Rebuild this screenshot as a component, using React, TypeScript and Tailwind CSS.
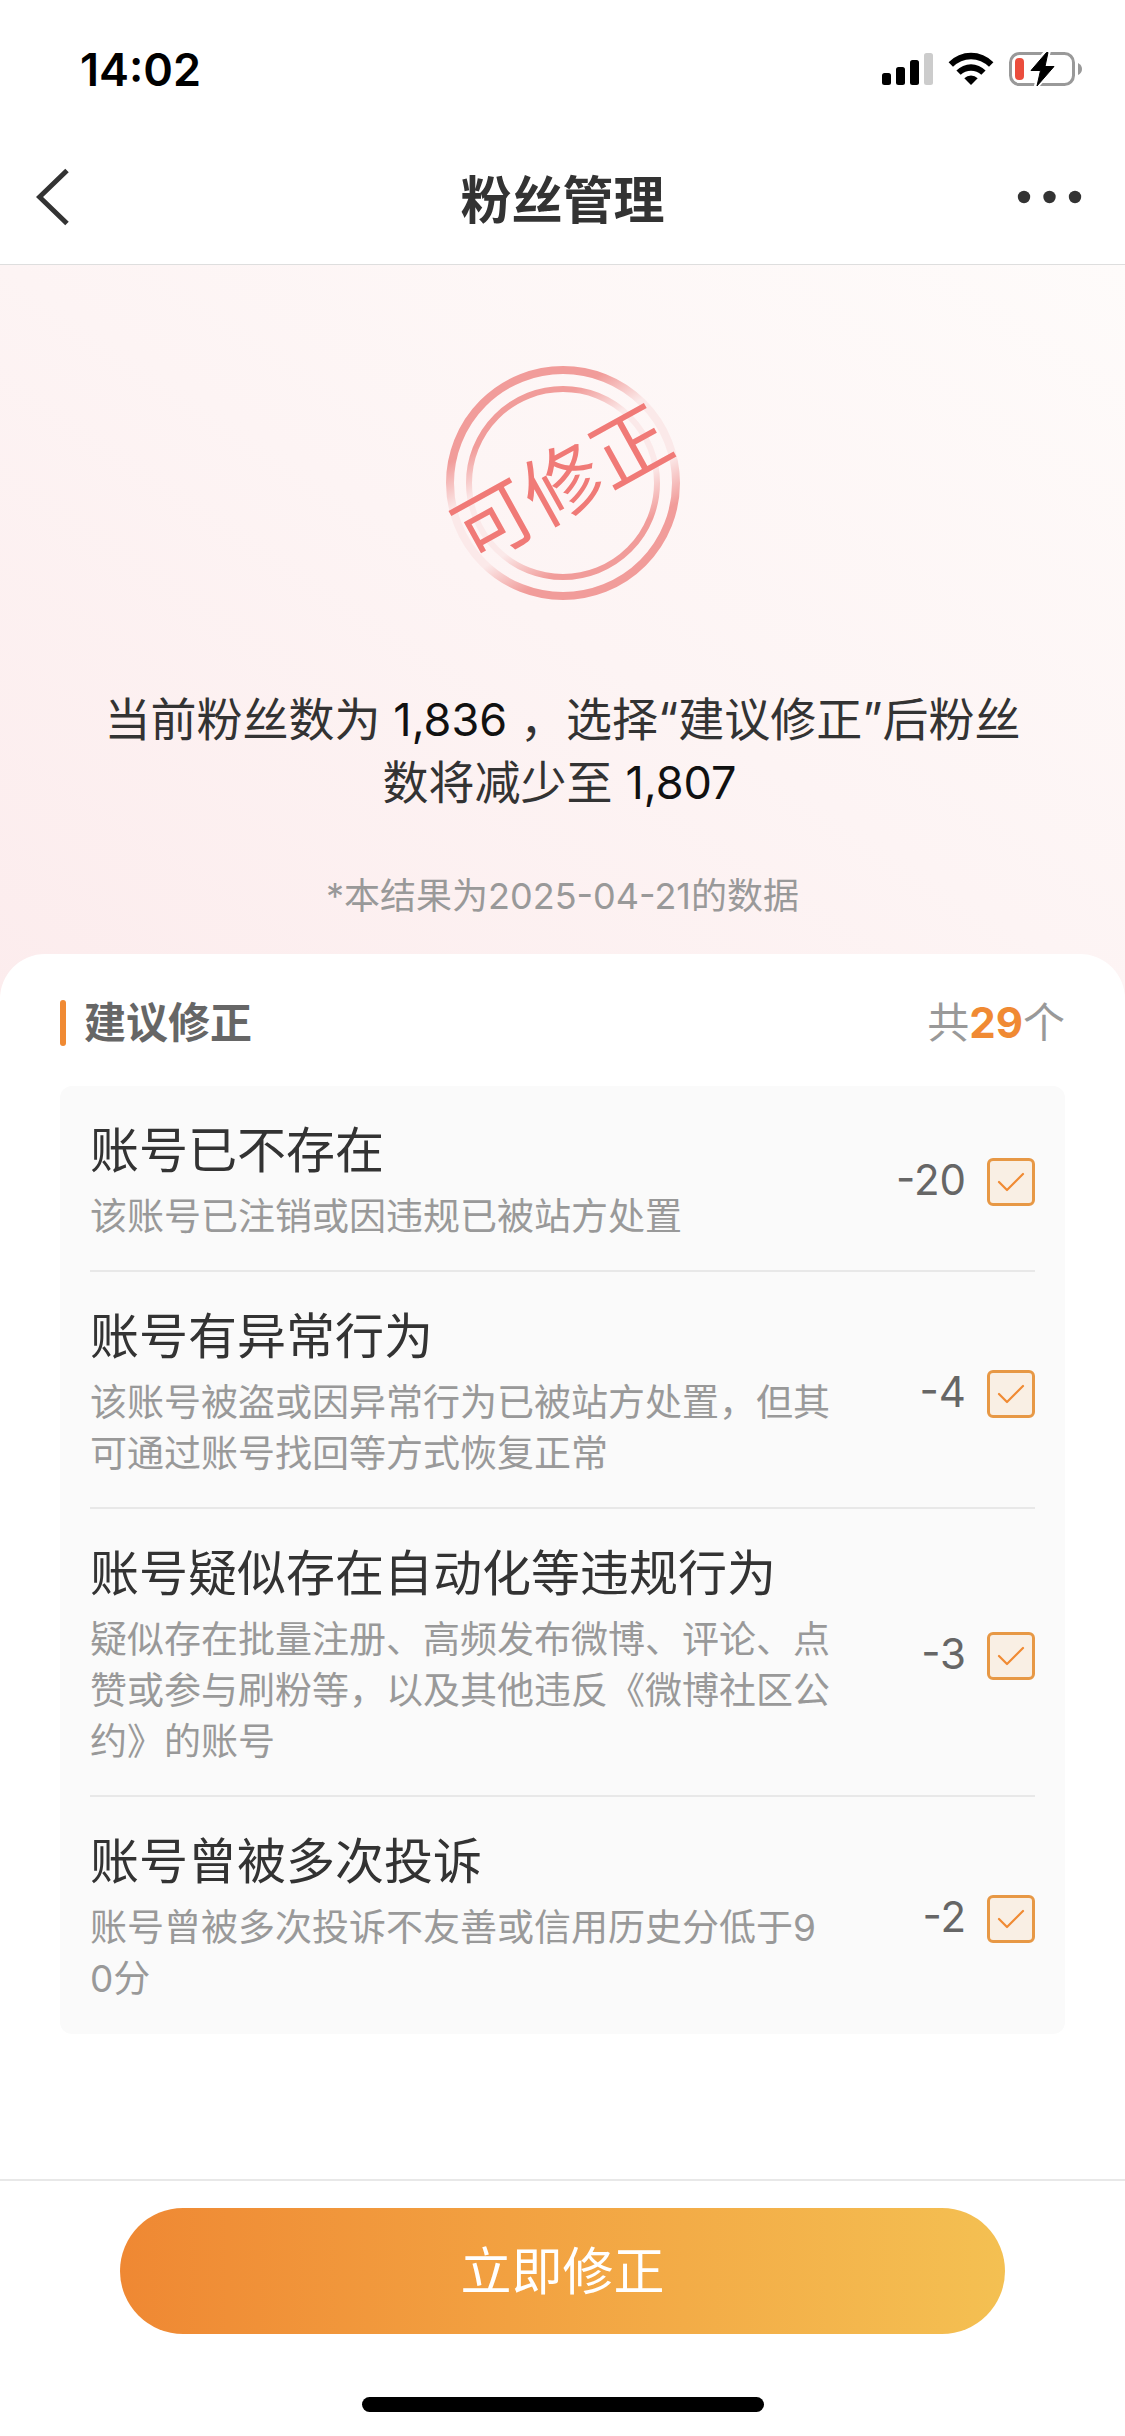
import React, { useState } from 'react';

interface FixItem {
  id: string;
  title: string;
  desc: string;
  count: number;
}

const ITEMS: FixItem[] = [
  { id: 'gone', title: '账号已不存在', desc: '该账号已注销或因违规已被站方处置', count: 20 },
  { id: 'abnormal', title: '账号有异常行为', desc: '该账号被盗或因异常行为已被站方处置，但其可通过账号找回等方式恢复正常', count: 4 },
  { id: 'bot', title: '账号疑似存在自动化等违规行为', desc: '疑似存在批量注册、高频发布微博、评论、点赞或参与刷粉等，以及其他违反《微博社区公约》的账号', count: 3 },
  { id: 'reported', title: '账号曾被多次投诉', desc: '账号曾被多次投诉不友善或信用历史分低于90分', count: 2 },
];

const StatusBar: React.FC = () => (
  <div className="flex items-center justify-between h-[138px] pl-20 pr-[42px] text-black">
    <span className="text-[45px] leading-none font-semibold">14:02</span>
    <div className="flex items-center gap-[15px]">
      <svg width="51" height="34" viewBox="0 0 51 34">
        <rect x="0" y="21" width="9" height="12" rx="2.5" />
        <rect x="14" y="15" width="9" height="18" rx="2.5" />
        <rect x="28" y="8" width="9" height="25" rx="2.5" />
        <rect x="42" y="1" width="9" height="32" rx="2.5" fill="#cccccc" />
      </svg>
      <svg width="46" height="34" viewBox="0 0 46 34">
        <path d="M0.6 10.2 A31.5 31.5 0 0 1 45.4 10.2 L41 14.8 A25 25 0 0 0 5 14.8 Z" />
        <path d="M8.4 18.4 A20.6 20.6 0 0 1 37.6 18.4 L33.3 22.8 A14.8 14.8 0 0 0 12.7 22.8 Z" />
        <path d="M16.3 26.2 A9.6 9.6 0 0 1 29.7 26.2 L23 33 Z" />
      </svg>
      <svg width="74" height="36" viewBox="0 0 74 36">
        <rect x="1.5" y="2.5" width="63" height="31" rx="9" fill="none" stroke="#999999" strokeWidth="3" />
        <path d="M69 12 Q73 14 73 18 Q73 22 69 24 Z" fill="#999999" />
        <rect x="6" y="7" width="9" height="22" rx="4" fill="#eb4d3d" />
        <path d="M37.5 1 L22 19.5 L31 19.5 L27.5 35 L45 15.5 L35.5 15.5 L39 1.5 Z" stroke="#ffffff" strokeWidth="5" />
        <path d="M37.5 1.5 L22 19.5 L31.5 19.5 L28 35 L45 15.5 L36 15.5 L39 1.5 Z" stroke="#000000" strokeWidth="1" strokeLinejoin="round" />
      </svg>
    </div>
  </div>
);

const NavBar: React.FC = () => (
  <header className="flex items-center justify-between h-[127px] pb-2 px-9 border-b border-[#dedede] text-[#333333]">
    <button type="button" aria-label="返回" className="w-[72px]">
      <svg width="34" height="58" viewBox="0 0 34 58" fill="none" stroke="currentColor" strokeWidth="5">
        <path d="M31 2.5 L3.5 29 L31 55.5" />
      </svg>
    </button>
    <h1 className="pt-1.5 text-[51px] leading-none font-bold">粉丝管理</h1>
    <button type="button" aria-label="更多" className="w-[72px]">
      <svg width="72" height="14" viewBox="0 0 72 14" fill="currentColor">
        <circle cx="7" cy="7" r="6.2" />
        <circle cx="32.5" cy="7" r="6.2" />
        <circle cx="58" cy="7" r="6.2" />
      </svg>
    </button>
  </header>
);

const Stamp: React.FC = () => (
  <svg width="234" height="234" viewBox="0 0 234 234" className="overflow-visible">
    <defs>
      <linearGradient id="ring" gradientUnits="userSpaceOnUse" x1="58" y1="16" x2="176" y2="218">
        <stop offset="0.18" stopColor="#f19c9a" />
        <stop offset="0.36" stopColor="#fbe9e9" />
        <stop offset="0.64" stopColor="#fbe9e9" />
        <stop offset="0.82" stopColor="#f19c9a" />
      </linearGradient>
    </defs>
    <circle cx="117" cy="117" r="113" fill="none" stroke="url(#ring)" strokeWidth="8" />
    <circle cx="117" cy="117" r="94" fill="none" stroke="url(#ring)" strokeWidth="6" />
    <text x="116" y="146" textAnchor="middle" fontSize="78" fill="#f07a77" transform="rotate(-29 117 117)">
      可修正
    </text>
  </svg>
);

const App: React.FC = () => {
  const [selected, setSelected] = useState<string[]>(ITEMS.map((item) => item.id));

  const toggle = (id: string) => {
    setSelected((prev) => (prev.includes(id) ? prev.filter((x) => x !== id) : [...prev, id]));
  };

  const total = ITEMS.reduce((sum, item) => sum + item.count, 0);

  return (
    <div className="min-h-screen flex flex-col bg-white font-['Inter','Noto_Sans_CJK_SC',sans-serif]">
      <StatusBar />
      <NavBar />

      {/* Result */}
      <section className="flex flex-col items-center pt-[101px] pb-[77px] px-[90px] text-center bg-linear-to-tr from-[#fceced] via-[#fdf4f4] to-[#fefbfa]">
        <Stamp />
        <p className="mt-[88px] text-[46px] leading-[63px] text-[#333333]">
          当前粉丝数为 <span className="text-[45px] leading-none text-[#111111]">1,836</span> ，选择“建议修正”后粉丝数将减少至 <span className="mr-1.5 text-[45px] leading-none text-[#111111]">1,807</span>
        </p>
        <p className="mt-[57px] text-4xl leading-[51px] text-[#999999]">*本结果为2025-04-21的数据</p>
      </section>

      {/* Suggestions */}
      <main className="flex-1 -mt-[45px] rounded-t-[45px] bg-white px-[60px] pt-[39px]">
        <div className="flex items-center justify-between h-[60px] text-[42px] leading-[60px]">
          <div className="flex items-center gap-[18px]">
            <span className="w-[6px] h-[46px] rounded-full bg-[#f08a33]" />
            <h2 className="font-bold text-[#666666]">建议修正</h2>
          </div>
          <p className="text-[#999999]">
            共<span className="font-bold text-[#f08a33]">{total}</span>个
          </p>
        </div>

        <ul className="mt-[33px] px-[30px] rounded-xl bg-[#fafafa]">
          {ITEMS.map((item) => (
            <li key={item.id} className="flex items-center justify-between pt-9 pb-7 border-b-2 border-[#e8e8e8] last:border-0 last:pb-[30px]">
              <label htmlFor={item.id} className="max-w-[744px]">
                <span className="block text-[49px] leading-[57px] text-[#333333]">{item.title}</span>
                <span className="block mt-3 text-[37px] leading-[51px] text-[#999999] break-all">{item.desc}</span>
              </label>
              <div className="flex items-center gap-[21px] shrink-0">
                <span className="pb-1 text-[42px] leading-none text-[#666666]">-{item.count}</span>
                <span className="relative flex">
                  <input
                    id={item.id}
                    type="checkbox"
                    checked={selected.includes(item.id)}
                    onChange={() => toggle(item.id)}
                    className="peer appearance-none size-12 rounded-md border-3 border-[#e79845] checked:bg-[#f9efe4]"
                  />
                  <svg
                    viewBox="0 0 48 48"
                    className="absolute inset-0 size-12 pointer-events-none hidden peer-checked:block"
                    fill="none"
                    stroke="#f08a33"
                    strokeWidth="2.2"
                    strokeLinecap="round"
                    strokeLinejoin="round"
                  >
                    <path d="M12 24 L20 32 L36 16" />
                  </svg>
                </span>
              </div>
            </li>
          ))}
        </ul>
      </main>

      {/* Submit */}
      <footer className="flex flex-col items-center border-t-2 border-[#e8e8e8] pt-[27px] pb-6 px-[120px]">
        <button type="button" className="w-full h-[126px] rounded-full bg-linear-to-r from-[#ef8833] to-[#f4c052] text-[51px] leading-none text-white">
          立即修正
        </button>
        <div className="mt-[63px] w-[402px] h-[15px] rounded-full bg-black" />
      </footer>
    </div>
  );
};

export default App;
